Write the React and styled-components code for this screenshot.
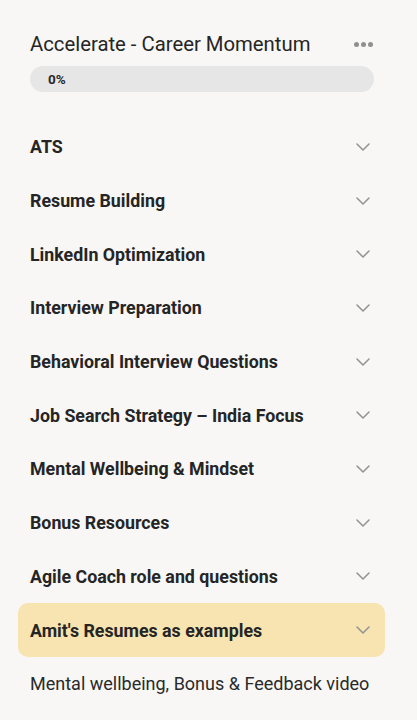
import React from "react";
import styled, { createGlobalStyle } from "styled-components";

const GlobalStyle = createGlobalStyle`
    html, body {
        margin: 0;
        padding: 0;
        background: #f8f7f5;
        font-family: Roboto, "Noto Sans", sans-serif;
        color: #252525;
    }
`;

const Wrapper = styled.div`
    width: 417px;
    min-height: 720px;
    padding-top: 30px;
    box-sizing: border-box;
`;

const Header = styled.div`
    display: flex;
    align-items: center;
    justify-content: space-between;
    padding: 0 44px 0 30px;
    height: 28px;
`;

const Title = styled.h1`
    margin: 0;
    font-size: 20.3px;
    font-weight: 400;
    color: #252525;
`;

const MoreDots = styled.div`
    display: flex;
    gap: 2px;

    & > span {
        width: 5px;
        height: 5px;
        border-radius: 50%;
        background: #8f8f8f;
    }
`;

const Progress = styled.div`
    margin: 8px 43px 0 30px;
    height: 26px;
    border-radius: 13px;
    background: #e6e6e6;
    display: flex;
    align-items: center;
    padding-left: 18px;
    font-size: 13.5px;
    font-weight: 700;
    color: #2a2a2a;
`;

const List = styled.div`
    margin-top: 28px;
    display: flex;
    flex-direction: column;
`;

const Row = styled.div`
    margin: 0 32px 0 18px;
    height: 53.7px;
    padding: 0 14px 0 12px;
    display: flex;
    align-items: center;
    justify-content: space-between;
    border-radius: 10px;
    background: ${(p) => (p.$active ? "#f7e4b0" : "transparent")};
    font-size: 17.8px;
    font-weight: 700;
    color: #252525;
`;

const SubItem = styled.div`
    padding: 16px 30px;
    font-size: 18px;
    font-weight: 400;
    color: #2a2a2a;
`;

const Chevron = () => (
    <svg width="16" height="16" viewBox="0 0 16 16" fill="none">
        <path d="M2 5 L8 11 L14 5" stroke="#929292" strokeWidth="1.5" strokeLinecap="round" strokeLinejoin="round" />
    </svg>
);

const sections = [
    "ATS",
    "Resume Building",
    "LinkedIn Optimization",
    "Interview Preparation",
    "Behavioral Interview Questions",
    "Job Search Strategy – India Focus",
    "Mental Wellbeing & Mindset",
    "Bonus Resources",
    "Agile Coach role and questions",
    "Amit's Resumes as examples",
];

export default function App() {
    return (
        <Wrapper>
            <GlobalStyle />
            <Header>
                <Title>Accelerate - Career Momentum</Title>
                <MoreDots><span /><span /><span /></MoreDots>
            </Header>
            <Progress>0%</Progress>
            <List>
                {sections.map((s, i) => (
                    <Row key={s} $active={i === sections.length - 1}>
                        {s}
                        <Chevron />
                    </Row>
                ))}
            </List>
            <SubItem>Mental wellbeing, Bonus &amp; Feedback video</SubItem>
        </Wrapper>
    );
}
